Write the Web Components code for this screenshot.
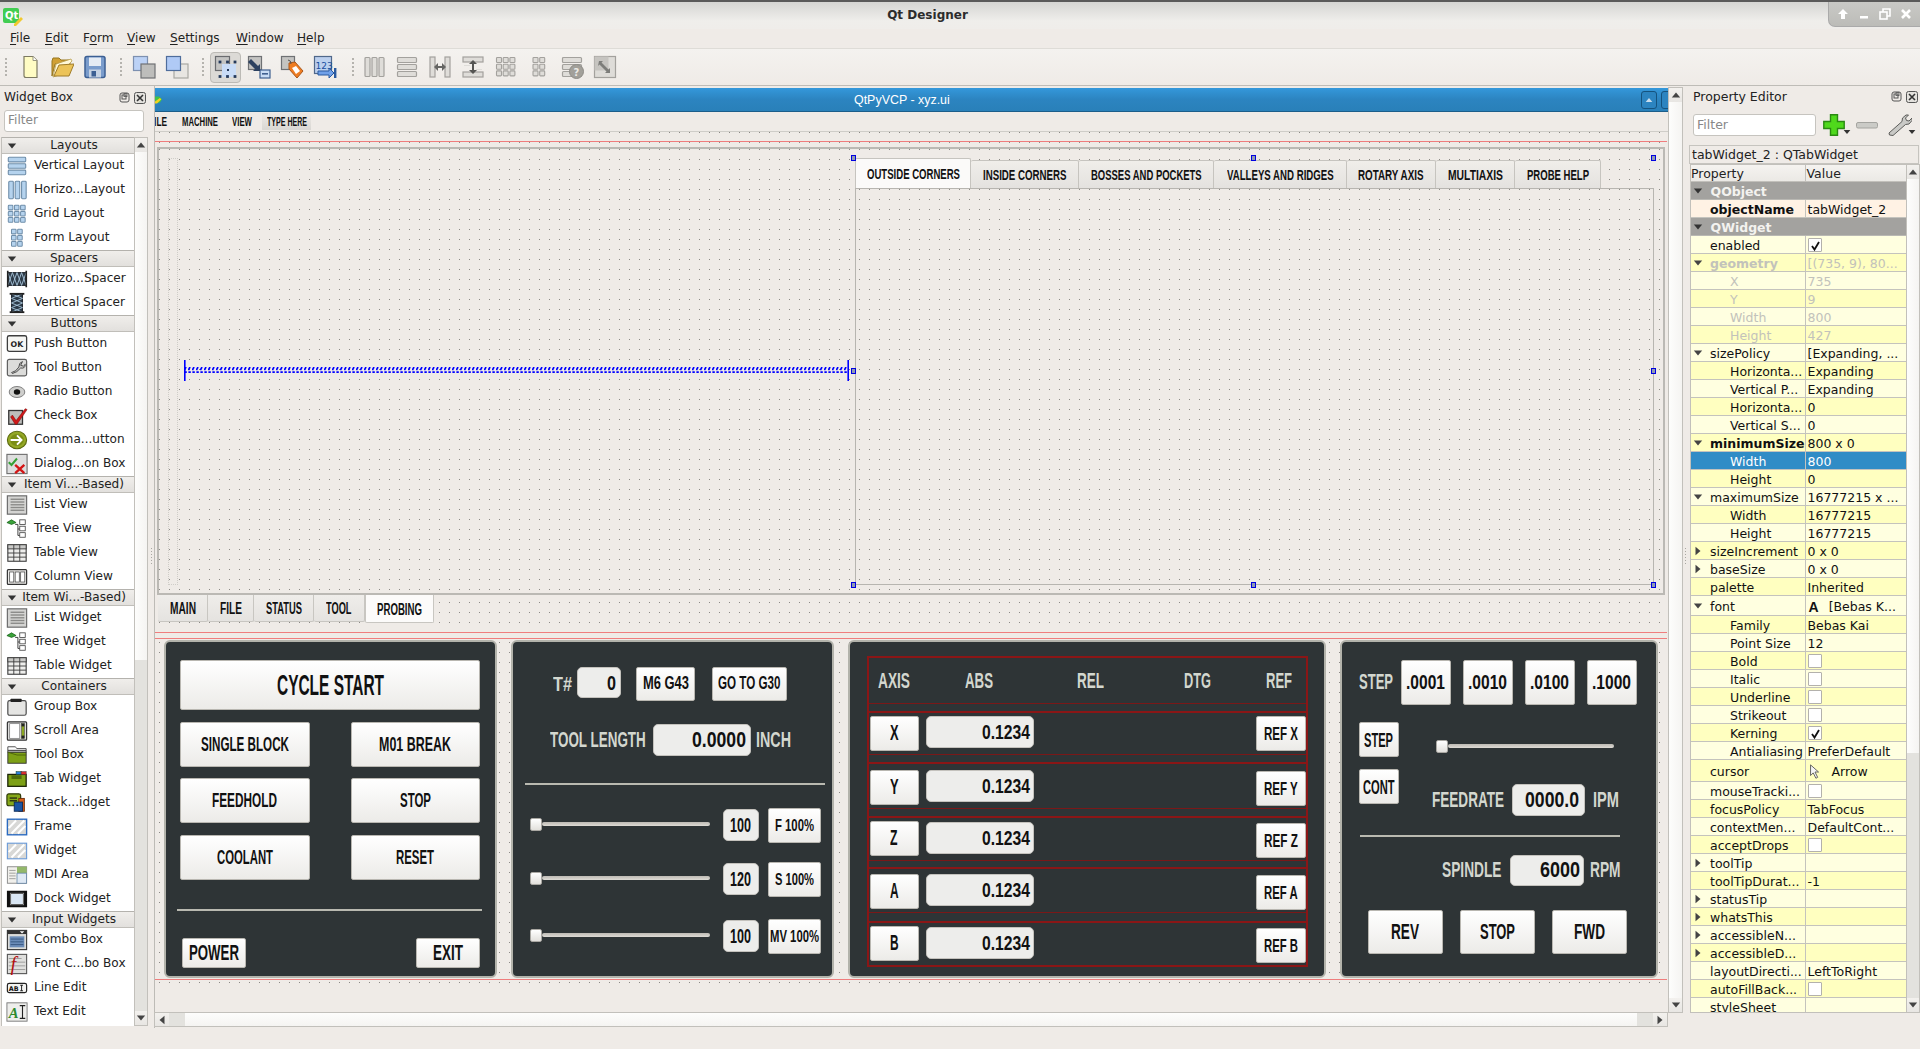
<!DOCTYPE html>
<html lang="en"><head><meta charset="utf-8"><title>Qt Designer</title>
<style>html,body{margin:0;padding:0;height:100%;background:#efebe7;overflow:hidden}</style></head>
<body><qd-app></qd-app>
<script>
const UI='"DejaVu Sans",sans-serif';
const ctx=document.createElement('canvas').getContext('2d');
const S=(inner,w=24,h=w,vb='0 0 24 24')=>`<svg xmlns="http://www.w3.org/2000/svg" viewBox="${vb}" width="${w}" height="${h}" style="display:block;flex:none">${inner}</svg>`;
const r=(x,y,w,h,f,s='none',sw=1,rx=0)=>`<rect x="${x}" y="${y}" width="${w}" height="${h}" fill="${f}" stroke="${s}" stroke-width="${sw}" rx="${rx}"/>`;
const p=(d,f='none',s='none',sw=1)=>`<path d="${d}" fill="${f}" stroke="${s}" stroke-width="${sw}"/>`;
const T=(x,y,t,sz,f,w=700,fam='DejaVu Sans',extra='')=>`<text x="${x}" y="${y}" font-size="${sz}" fill="${f}" font-weight="${w}" font-family="${fam}" ${extra}>${t}</text>`;
const hbars=(f,s)=>[3,10,17].map(x=>r(x,2.5,5,19,f,s,1.2,1)).join('');
const vbars=(f,s)=>[2.5,9.5,16.5].map(y=>r(2.5,y,19,5,f,s,1.2,1)).join('');
const grid=(f,s)=>{let o='';for(let i=0;i<3;i++)for(let j=0;j<3;j++)o+=r(2.5+i*6.7,2.5+j*6.7,5,5,f,s,1.1,.8);return o};
const form=(f,s)=>{let o='';for(let i=0;i<2;i++)for(let j=0;j<3;j++)o+=r(6+i*6.7,2.5+j*6.7,5,5,f,s,1.1,.8);return o};
const GF='#dfddd9',GS='#a3a19d',BF='#b5d3ee',BS='#6f8eaa';
const boxg=r(1.5,1.5,13,13,'#c4c4c2','#6f7174',1.2);
const IC={
 nw:p('M6 1.5h9l4 4v17H8q-2 0-2-2z','#fffcc4','#7d7a62',1.2)+p('M15 1.5v4h4','#fff','#9a9780',1),
 open:p('M2 6l1-3h6l2 2h8l1 3v1H5L2 21z','#d0a035','#97761f',1)+p('M6 9l15-5 1 2-13 14-6 2z','#fff8d8','#b59a4a',.8)+p('M4 21l5-11 15-1-5 12z','#ecc358','#a07c28',1),
 save:r(2,1.5,20,21,'#7a9ccc','#3c5f93',1.5,2)+r(6,2.5,12,8.5,'#e6ecf4')+r(6,14.5,12,8,'#c5d2e3')+r(8.5,16,4.5,5.5,'#3c5f93'),
 front:r(1.5,1.5,14,14,'#bcd2f6','#7d90b0',1.2)+r(9,9,14,14,'#bdbdbb','#6f7174',1.2),
 back:r(9,9,14,14,'#e8e6e2','#a8a8a3',1.2)+r(1.5,1.5,14,14,'#b0caf6','#4f6d9c',1.2),
 edit:r(1.5,1.5,14,14,'#c4c4c2','#6a6c6f',1.2)+r(8,9,14,13,'#c9dcf7')+[[6,7],[21,7],[6,21.5],[21,21.5],[13.5,21.5],[13.5,7]].map(a=>r(a[0]-1.4,a[1]-1.4,2.8,2.8,'#253a5c')).join('')+r(13,14,2,2,'#253a5c'),
 signal:boxg+r(13,15,10,8,'#c8dcf4','#3f5f8f',1.2)+r(15,18,6,1.6,'#3f5f8f')+p('M4 4l7 7 2-2v7H6l2-2-7-7z','#2c4160'),
 buddy:boxg+p('M9 8l6-1 8 9-6 7-8-9z','#ef7d22','#a9561a',1)+p('M12 13l4-2 4 5-4 3z','#fff')+p('M8 5q3 0 3 4','none','#555',1),
 tabo:r(1.5,1.5,17,17,'#bcd0ee','#50688a',1.2)+T(2.5,14,'123',9,'#1a4fa0',400,'DejaVu Sans')+p('M5 16h11v-3l5 5-5 5v-3H5z','#6fa0e8','#2a5aa0',1)+r(21,13,2.4,10,'#2a5aa0'),
 ghbar:hbars(GF,GS),gvbar:vbars(GF,GS),
 gspl:r(2,2,5,20,GF,GS,1.2)+r(17,2,5,20,GF,GS,1.2)+p('M6 12l4-4v3h4V8l4 4-4 4v-3h-4v3z','#656563'),
 gspv:r(2,2,20,5,GF,GS,1.2)+r(2,17,20,5,GF,GS,1.2)+p('M12 5l4 4h-3v6h3l-4 4-4-4h3V9H8z','#555553')+r(3,10,6,1,GF)+r(15,14,6,1,GF),
 ggrid:grid(GF,GS),gform:form(GF,GS),
 gformq:vbars(GF,GS)+`<circle cx="16.5" cy="16.5" r="7" fill="#a2a09a" stroke="#8d8b86"/>`+T(13.5,20.5,'?',10,'#ebe9e5',700),
 gadj:r(1.5,1.5,21,21,'#dedcd8','#a3a19d',1.2)+r(1.5,1.5,14,14,'#c6c4c0')+p('M6 6l4 0-1.5 1.5 7 7L17 13v5h-5l1.5-1.5-7-7L5 11z','#7d7d7a'),
 vbox:vbars(BF,BS),hbox:hbars(BF,BS),gridb:grid(BF,BS),formb:form(BF,BS),
 hsp:r(2,5,20,14,'#2c3a48','#1a1f26',1)+p('M2 5l5 14 5-14 5 14 5-14M2 19l5-14 5 14 5-14 5 14','none','#a6c3d8',1)+r(1,3,1.8,18,'#222')+r(21.2,3,1.8,18,'#222'),
 vsp:r(6,2,12,20,'#2c3a48','#1a1f26',1)+p('M6 2l12 5-12 5 12 5-12 5M18 2L6 7l12 5-12 5 12 5','none','#a6c3d8',1)+r(4,1,16,2,'#222')+r(4,21,16,2,'#222'),
 push:r(1.5,3,21,17,'#f6f6f3','#3e3e3e',1.4,2)+T(5,15.5,'OK',8.5,'#222'),
 tool:r(1.5,2.5,21,18,'#dcdcda','#5e5e5e',1.3,2)+p('M6 17q5-1 8-6l1-4 3-2-2 4 3 1 2-2q0 5-5 4-4 5-9 6z','#c9c9c7','#444',1),
 radio:`<ellipse cx="12" cy="12" rx="8.5" ry="6" fill="#cfcfcd" stroke="#777"/><ellipse cx="12" cy="12" rx="3.5" ry="3" fill="#111"/>`,
 chk:r(3,6,15,15,'#bdbdbb','#333',1.4)+p('M7 11l4 6L21 4l2 1-11 16h-2l-5-8z','#d01818','#7a0f0f',.6),
 cmd:`<ellipse cx="12" cy="12" rx="10.5" ry="9.5" fill="#94a825" stroke="#5c6a10" stroke-width="1.2"/><ellipse cx="12" cy="12" rx="7.5" ry="6.5" fill="#7a8d14"/>`+p('M5 12h12M12 7l5 5-5 5','none','#fff',2),
 dlg:r(1,1.5,22,21,'#dedede','#6d6d6d',1.2)+p('M3 10l3 3 6-7','none','#35a035',2.2)+p('M10 13l10 9M20 13l-10 9','none','#d41515',2.6),
 list:r(1.5,2,21,20,'#d4d4d2','#6c6c6c',1.3)+[5,8,11,14,17].map(y=>r(5,y,15,1.5,'#8a8a88')).join(''),
 tree:p('M1 5l5-3 5 3-5 2z','#39a339','#155c15',.8)+p('M10 7h3v12h3M13 12h3','none','#333',1)+r(15,9,6,5,'#fff','#444',.9)+r(15,16,6,5,'#fff','#444',.9)+r(15,2,6,5,'#fff','#444',.9),
 table:r(2,3,20,18,'#eeeeec','#3d3d3d',1.2)+r(2,3,20,4.5,'#c9c9c7','#3d3d3d',1)+p('M2 12h20M2 16.5h20M8.5 3v18M15 3v18','none','#3d3d3d',1),
 col:r(1.5,4,21,16,'#ecebe8','#333',1.3,1)+r(4,6.5,4.5,11,'#fff','#444',.8)+r(10,6.5,4.5,11,'#fff','#444',.8)+r(16,6.5,4.5,11,'#fff','#444',.8),
 grp:r(2,5,20,16,'#e5e5e3','#4a4a4a',1.3,2)+r(5,3,12,3.5,'#222',"none",1,.5),
 scr:r(1.5,2,21,20,'#dcdcda','#333',1.3,1)+r(4,4,11,16,'#fff','#777',.8)+r(17,4,3,16,'#8aa520','#444',.6)+r(17,4,3,3,'#222')+r(17,17,3,3,'#222'),
 tbx:p('M2 3h8l2 2h10v2H2z','#fff','#333',.9)+p('M2 7h20v2H2z','#e5e5e3','#333',.9)+r(2,9,20,12,'#7da016','#333',1)+p('M2 9l10 3h10','none','#4c6408',1),
 tabw:r(2,7,20,13,'#7da016','#1c2408',1.4)+r(6,8,11,4,'#4f6b0b')+r(11,4,5.5,3.2,'#2d7fd8','#143',.6)+r(16.5,4,5.5,3.2,'#d82d2d','#433',.6),
 stk:r(1,2,15,13,'#86a818','#2c3808',1.3,2)+r(14,7,6,14,'#d85f1a','#6a2d0a',1)+r(9,11,9,10,'#1b55a3','#0c2b5a',1)+r(4,6,8,1.2,'#111')+r(4,9,8,1.2,'#111'),
 frm:r(1.5,3.5,21,17,'#d8d8d6','#2a6ac0',1.5)+p('M3 13l8-8M6 19L20 5M13 19l8-8','none','#fff',2.2),
 wdg:r(1.5,3.5,21,17,'#d8d8d6','#6a9ad8',1.2)+p('M3 13l8-8M6 19L20 5M13 19l8-8','none','#fff',2.2),
 mdi:r(1.5,3,21,18,'#f1f0ec','#888',1)+r(12,3,10.5,7,'#93b86a')+r(12,10,10.5,11,'#dfe9f4','#5b7fa3',.8)+p('M3.5 7h7M3.5 10h7M3.5 13h7M3.5 16h7','none','#9a9a98',1),
 dock:r(1,3,22,18,'#111')+r(5,6,14,12,'#d9e6f4','#fff',1.3)+p('M5 6h14v12H5z','none','#222',.8),
 combo:r(1.5,1.5,21,21,'#dbdbd9','#333',1.2)+r(1.5,1.5,21,4,'#333')+p('M15 2.5h5l-2.500 2.500z','#fff')+r(4,8,16,12,'#6b8cb8')+p('M5 11h14M5 14h14M5 17h14','none','#37567f',1),
 fontc:r(1.5,1.5,21,21,'#dfdfdd','#555',1.2)+p('M3 6h14M3 10h18M3 14h18M3 18h18','none','#999',1)+T(5,20,'f',22,'#b51010',400,'Liberation Serif','font-style="italic"'),
 line:r(1.5,7,21,10,'#f3f3f1','#222',1.3,2)+T(3,15,'AB',7,'#111')+p('M17 9v6M15.500 9h3M15.500 15h3','none','#111',1),
 text:r(1,2,22,20,'#eeeeec','#777',1)+T(3,19,'A',16,'#2e8b2e',700,'Liberation Serif','font-style="italic"')+p('M15 5h6M15 19h6M18 5v14','none','#222',1.2),
};
const tri=(dir,c='#4a4a4a',sz=9)=>{const pts={d:'1,3 11,3 6,9',u:'1,9 11,9 6,3',l:'9,1 9,11 3,6',r:'3,1 3,11 9,6'}[dir];return `<svg viewBox="0 0 12 12" width="${sz}" height="${sz}" style="display:block;flex:none"><polygon points="${pts}" fill="${c}"/></svg>`};
const dockBtns=`<span style="display:flex;gap:4px;margin-left:auto">${S(r(1,1,9,9,'none','#555',1,2)+r(3,3,4,4,'none','#555',1)+r(5,1.6,3,3,'none','#555',.8),11,11,'0 0 11 11')}${S(r(.5,.5,11,11,'#e3e1dd','#555',1,2)+p('M3 3l6 6M9 3l-6 6','none','#333',1.6),12,12,'0 0 12 12')}</span>`;

function el(name,tpl,onconnect){customElements.define(name,class extends HTMLElement{
  constructor(){super();this.attachShadow({mode:'open'})}
  connectedCallback(){if(this._d)return;this._d=1;this.shadowRoot.innerHTML=typeof tpl==='function'?tpl(this):tpl;onconnect&&onconnect(this)}
})}

/* condensed display text, standing in for the Bebas Kai font of the form */
customElements.define('bk-t',class extends HTMLElement{
  constructor(){super();this.attachShadow({mode:'open'}).innerHTML=`<style>:host{display:block;flex:none;white-space:nowrap;font-family:"Liberation Sans",sans-serif;font-weight:700;text-align:left}span{display:inline-block;transform-origin:0 50%}</style><span><slot></slot></span>`}
  connectedCallback(){const w=+this.getAttribute('w'),s=+this.getAttribute('s'),wt=this.getAttribute('wt')||700;
    ctx.font=`${wt} ${s}px "Liberation Sans"`;const n=ctx.measureText(this.textContent).width;
    this.style.cssText+=`;width:${w}px;height:${s}px;line-height:${s}px;font-size:${s}px;font-weight:${wt}`;
    this.shadowRoot.querySelector('span').style.transform=`scaleX(${w/n})`}
});
const t=(w,s,x,st='')=>`<bk-t w="${w}" s="${s}" style="${st}">${x}</bk-t>`;
const lab=(w,s,x,st='')=>t(w,s,x,'color:#d3d7cf;'+st);

customElements.define('vcp-btn',class extends HTMLElement{
  constructor(){super();this.attachShadow({mode:'open'}).innerHTML=`<style>:host{display:flex;flex:none;box-sizing:border-box;align-items:center;justify-content:center;background:linear-gradient(#ffffff,#ecebe8);border:1px solid #b9b7b1;border-radius:2px;color:#111}</style><slot></slot>`}
  connectedCallback(){this.style.width=this.getAttribute('w')+'px';this.style.height=this.getAttribute('h')+'px'}
});
customElements.define('vcp-box',class extends HTMLElement{
  constructor(){super();this.attachShadow({mode:'open'}).innerHTML=`<style>:host{display:flex;flex:none;box-sizing:border-box;align-items:center;justify-content:flex-end;background:#ededeb;border:1px solid #c4c2bd;border-radius:5px;color:#111}</style><slot></slot>`}
  connectedCallback(){this.style.width=this.getAttribute('w')+'px';this.style.height=this.getAttribute('h')+'px';this.style.paddingRight=(this.getAttribute('pr')||4)+'px'}
});
const B=(w,h,tw,fs,x,st='')=>`<vcp-btn w="${w}" h="${h}" style="${st}">${t(tw,fs,x)}</vcp-btn>`;
const X=(w,h,tw,fs,x,st='',pr=4)=>`<vcp-box w="${w}" h="${h}" pr="${pr}" style="${st}">${t(tw,fs,x)}</vcp-box>`;

el('vcp-slider',`<style>:host{display:flex;flex:none;align-items:center;position:relative;height:13px}
 .h{width:12px;height:13px;box-sizing:border-box;flex:none;background:linear-gradient(#fff,#e2e0dc);border:1px solid #aaa8a3;border-radius:2px}
 .g{flex:1;height:4px;background:linear-gradient(#bdbab4,#dedbd5);border-radius:2px}</style><div class="h"></div><div class="g"></div>`,e=>{e.style.width=e.getAttribute('w')+'px'});

el('vcp-panel',`<style>:host{display:flex;flex-direction:column;flex:none;box-sizing:border-box;height:338px;background:#2e3436;border:2px solid #b3b3ab;border-radius:6px}</style><slot></slot>`,e=>{e.style.width=e.getAttribute('w')+'px'});

el('vcp-hr',`<style>:host{display:block;height:2px;background:#b9b9b0;flex:none}</style>`,e=>{e.style.width=e.getAttribute('w')+'px'});

el('vcp-panel-cycle',`<style>:host{display:block}
 .c{display:flex;flex-direction:column;padding:18px 0 0 14px}
 .r{display:flex;justify-content:space-between;width:300px}</style>
 <vcp-panel w="333"><div class="c">
 ${B(300,50,107,29,'CYCLE START')}
 <div class="r" style="margin-top:12px">${B(129.5,45,88,20.5,'SINGLE BLOCK')}${B(129.5,45,72,20.5,'M01 BREAK')}</div>
 <div class="r" style="margin-top:11px">${B(129.5,45,65,20.5,'FEEDHOLD')}${B(129.5,45,31,20.5,'STOP')}</div>
 <div class="r" style="margin-top:12px">${B(129.5,45,56,20.5,'COOLANT')}${B(129.5,45,38,20.5,'RESET')}</div>
 <vcp-hr w="305" style="margin:29px 0 0 -3px"></vcp-hr>
 <div class="r" style="margin-top:27px;padding-left:2px;width:298px">${B(64,30,50,22,'POWER')}${B(64,30,30,22,'EXIT')}</div>
 </div></vcp-panel>`);

const ovr=(top,sc,boxT,bt,tw,st)=>`<div class="o" style="margin-top:${top}px">${`<vcp-slider w="180"></vcp-slider>`}${X(36,32,21,19.5,sc,'margin-left:13px',7)}${B(53.5,34.6,tw,17,bt,'margin-left:8.500px')}</div>`;
el('vcp-panel-tool',`<style>:host{display:block}
 .c{display:flex;flex-direction:column;padding:24.500px 0 0 0}
 .f{display:flex;align-items:center}
 .o{display:flex;align-items:center;margin-left:17px}
 .o vcp-slider{margin-bottom:2px}</style>
 <vcp-panel w="323"><div class="c">
 <div class="f" style="margin-left:40px;height:34px;align-items:flex-start">${lab(19,21,'T#','margin:6px 0 0 0')}${X(44,31.5,9,21,'0','margin-left:4.500px',4)}${B(59,34,46,18.5,'M6 G43','margin-left:15.500px')}${B(75,34,62.500,18.5,'GO TO G30','margin-left:17px')}</div>
 <div class="f" style="margin:23.500px 0 0 37px">${lab(96,22,'TOOL LENGTH')}${X(98,32,54,22,'0.0000','margin-left:7px',4)}${lab(35,22,'INCH','margin-left:5px')}</div>
 <vcp-hr w="300" style="margin:27px 0 0 12px"></vcp-hr>
 ${ovr(23,'100',0,'F 100%',39)}${ovr(19.400,'120',0,'S 100%',39)}${ovr(22.400,'100',0,'MV 100%',49)}
 </div></vcp-panel>`);

const axRow=(ax,tx,top,h,bt,dt,rt)=>`<div class="ar" style="margin-top:${top}px;height:${h}px">
 <vcp-btn w="49" h="35" style="margin:${bt}px 0 0 .5px">${t(tx,22,ax)}</vcp-btn>
 ${X(108,32,48,20,'0.1234',`margin:${dt}px 0 0 7.500px`,3)}
 <vcp-btn w="50" h="35" style="margin:${rt}px 0 0 auto">${t(34,19,'REF '+ax)}</vcp-btn></div>`;
el('vcp-panel-axes',`<style>:host{display:block}
 .c{padding:14px 0 0 17px}
 .fr{box-sizing:border-box;width:441px;height:311px;border:2px solid #8a1616;display:flex;flex-direction:column;padding:0}
 .h{display:flex;align-items:center;height:46px;padding-left:9px;border-bottom:1px solid #7a1818;box-sizing:border-box;flex:none}
 .ar{display:flex;align-items:flex-start;box-sizing:border-box;border-top:2px solid #8a1616;border-bottom:1px solid #7a1818;flex:none}
 .ar:last-child{border-bottom:none}</style>
 <vcp-panel w="478"><div class="c"><div class="fr">
 <div class="h">${lab(32,22,'AXIS')}${lab(28,22,'ABS','margin-left:55px')}${lab(27,22,'REL','margin-left:84px')}${lab(27,22,'DTG','margin-left:80px')}${lab(26,22,'REF','margin-left:55px')}</div>
 ${axRow('X',8.6,6.7,44.6,3.3,3.3,3.3)}${axRow('Y',8.6,7.2,46.2,5.2,5.2,6.2)}${axRow('Z',7.5,7,45,3.3,4,5.6)}${axRow('A',8.6,6.6,46,4.7,4.7,5.7)}${axRow('B',8.6,7.4,44.3,3.3,4,5.3)}
 </div></div></vcp-panel>`);

el('vcp-panel-jog',`<style>:host{display:block}
 .c{position:relative;display:flex;flex-direction:column;padding:18px 0 0 17px}
 .f{display:flex;align-items:center}</style>
 <vcp-panel w="318"><div class="c">
 <div class="f" style="height:44.500px">${lab(34,22,'STEP')}
  ${B(49.5,44.5,39,19.5,'.0001','margin-left:8px')}${B(49.5,44.5,39,19.5,'.0010','margin-left:12.500px')}${B(49.5,44.5,39,19.5,'.0100','margin-left:12.500px')}${B(49.5,44.5,39,19.5,'.1000','margin-left:12.500px')}</div>
 <div class="f" style="align-items:flex-start;margin-top:17.500px">
  <div style="display:flex;flex-direction:column;flex:none">${B(39.5,35,29,20,'STEP')}${B(39.5,35,31.6,20,'CONT','margin-top:12px')}</div>
  <div style="display:flex;flex-direction:column;flex:none;margin-left:33.500px">
   <vcp-slider w="178" style="margin:17.500px 0 0 3.500px"></vcp-slider>
   <div class="f" style="margin-top:31px">${lab(72,22,'FEEDRATE')}${X(73.5,32,54,22,'0000.0','margin-left:7.500px',5)}${lab(26,22,'IPM','margin-left:8px')}</div>
  </div>
 </div>
 <vcp-hr w="260" style="margin:19px 0 0 1px"></vcp-hr>
 <div class="f" style="margin:18px 0 0 83px">${lab(59.5,22,'SPINDLE')}${X(73.5,31.5,40,22,'6000','margin-left:8.500px',3)}${lab(30.5,22,'RPM','margin-left:6.500px')}</div>
 <div class="f" style="margin:23.500px 0 0 9px">${B(74.5,44,28,22,'REV')}${B(74.5,44,35,22,'STOP','margin-left:17.500px')}${B(74.5,44,31,22,'FWD','margin-left:17.500px')}</div>
 </div></vcp-panel>`);

const hnd=(l,tp)=>`<i class="hd" style="left:${l}px;top:${tp}px"></i>`;
el('vcp-tabs-top',`<style>:host{display:block;position:relative;width:799px;height:427px;flex:none}
 .bar{display:flex;align-items:flex-end;height:30px}
 .tb{box-sizing:border-box;height:28px;display:flex;align-items:center;justify-content:center;background:linear-gradient(#f0eeea,#e4e2df);border:1px solid #c6c4bf;border-bottom:none;border-left:none;border-radius:2px 2px 0 0;color:#111}
 .tb.a{height:30px;background:#fbfaf9;border-left:1px solid #c6c4bf}
 .pane{box-sizing:border-box;height:397px;border:1px solid #b7b5b0;border-top-color:#b7b5b0;width:799px}
 .hd{position:absolute;width:5px;height:6px;box-sizing:border-box;background:#8f9bb0;border:1px solid #0000e0;margin:-3px 0 0 -3px}</style>
 <div class="bar">
 <div class="tb a" style="width:116px">${t(93,15,'OUTSIDE CORNERS')}</div>
 <div class="tb" style="width:108px">${t(83.5,15,'INSIDE CORNERS')}</div>
 <div class="tb" style="width:135px">${t(111,15,'BOSSES AND POCKETS')}</div>
 <div class="tb" style="width:133px">${t(107,15,'VALLEYS AND RIDGES')}</div>
 <div class="tb" style="width:89px">${t(66,15,'ROTARY AXIS')}</div>
 <div class="tb" style="width:79px">${t(55,15,'MULTIAXIS')}</div>
 <div class="tb" style="width:86px">${t(62,15,'PROBE HELP')}</div></div>
 <div class="pane"></div>
 ${hnd(-1,0)}${hnd(399,0)}${hnd(799,0)}${hnd(-1,213)}${hnd(799,213)}${hnd(-1,427)}${hnd(399,427)}${hnd(799,427)}`);

el('vcp-spacer',`<style>:host{display:block;flex:none;width:665px;height:21px;position:relative}</style>
 <svg viewBox="0 0 665 21" width="665" height="21" style="display:block"><defs><pattern id="z" width="4" height="6" patternUnits="userSpaceOnUse" x="0" y="7"><path d="M.4 3.200L2 0M.4 5.200h2.400" fill="none" stroke="#0000ff" stroke-width="1.700"/></pattern></defs><rect x="1" y="7" width="664" height="6" fill="url(#z)"/><rect y="0" width="1.600" height="21" x="0" fill="#0000ff"/><rect y="0" width="1.600" height="21" x="663.400" fill="#0000ff"/></svg>`);

const btab=(w,tw,x,a)=>`<div class="t${a?' a':''}" style="width:${w}px">${t(tw,16,x)}</div>`;
el('vcp-form',`<style>:host{display:flex;flex-direction:column;flex:none;width:1513px}
 .tl{height:24px;flex:none;background:linear-gradient(#3498db,#2c84c0 50%,#2980b9);border-bottom:1px solid #1c5e8a;box-sizing:border-box;display:flex;align-items:center;position:relative;color:#fff;overflow:hidden}
 .tl bk-t{position:absolute;left:699px;top:5px}
 .wb{position:absolute;top:3px;box-sizing:border-box;height:18px;border:1px solid #15537e;border-radius:3px;background:#2c84c0;display:flex;align-items:center;justify-content:center}
 .mb{height:20px;flex:none;box-sizing:border-box;border-bottom:1px solid #cfcdc8;display:flex;align-items:flex-start;overflow:hidden;color:#111;padding-top:3px}
 .mb .hv{display:flex;align-items:center;justify-content:center;width:49px;height:18px;margin:-3px 0 0 10px;background:linear-gradient(#efebe7,#d9d7d3)}
 .bd{flex:1;display:flex;flex-direction:column;background-image:radial-gradient(circle at .5px .5px,#8c8a86 .7px,transparent .8px);background-size:10px 10px;background-position:4px 0}
 .red{height:1px;background:#ef7d7d;flex:none;width:1512px}
 .fr{margin:5px 0 0 2px;box-sizing:border-box;width:1508px;height:448px;flex:none;border:2px solid #bbb9b4;display:flex;background-color:#efebe7;background-image:radial-gradient(circle at .5px .5px,#8c8a86 .7px,transparent .8px);background-size:10px 10px;background-position:0 0}
 .dot{box-sizing:border-box;width:10px;height:427px;margin:9px 0 0 9px;border:1px dotted #cfcdc8;flex:none}
 .tb2{display:flex;height:28px;flex:none;margin-left:3px;align-items:flex-start}
 .t{box-sizing:border-box;height:27px;padding-top:2px;display:flex;align-items:center;justify-content:center;background:linear-gradient(#efedea,#e5e3e0);border:1px solid #c8c6c1;border-top:none;border-left:none;border-radius:0 0 2px 2px;color:#111}
 .t.a{height:28px;background:#fcfbfa;border-left:1px solid #c8c6c1}
 .ps{display:flex;gap:14px;margin:1px 0 0 9px;flex:none}</style>
 <div class="tl">${S(p('M-4 2h10l4 4-3 5H-4z','#3fc14b')+p('M0 9l7-5 2 2-6 6H0z','#f5d21f'),7,12,'0 0 10 14')}
  <bk-t w="96" s="13" wt="400" style="font-weight:400">QtPyVCP - xyz.ui</bk-t>
  <div class="wb" style="left:1486px;width:16px">${tri('u','#c9dcec',8)}</div><div class="wb" style="left:1506px;width:16px"></div></div>
 <div class="mb"><bk-t w="18" s="13" style="margin-left:-6px">FILE</bk-t><bk-t w="36" s="13" style="margin-left:15px">MACHINE</bk-t><bk-t w="20" s="13" style="margin-left:14px">VIEW</bk-t><div class="hv">${t(40,13,'TYPE HERE')}</div></div>
 <div class="bd">
  <div class="red" style="margin-top:9px"></div>
  <div class="fr"><div class="dot"></div><vcp-spacer style="margin:211px 0 0 6px"></vcp-spacer><vcp-tabs-top style="margin:9px 0 0 6px"></vcp-tabs-top></div>
  <div class="tb2">${btab(50,26,'MAIN')}${btab(46,22,'FILE')}${btab(60,36,'STATUS')}${btab(51,25.5,'TOOL')}${btab(68.5,45,'PROBING',1)}</div>
  <div class="red" style="margin-top:9px"></div>
  <div class="red" style="margin-top:5px"></div>
  <div class="ps"><vcp-panel-cycle></vcp-panel-cycle><vcp-panel-tool></vcp-panel-tool><vcp-panel-axes></vcp-panel-axes><vcp-panel-jog></vcp-panel-jog></div>
  <div class="red" style="margin-top:1px"></div>
  <div style="height:5px"></div>
 </div>`);

/* generic scrollbar */
el('qd-scroll',e=>{const v=e.getAttribute('o')==='v',b=+e.getAttribute('b')||0,a=+e.getAttribute('a')||0;
 return `<style>:host{display:flex;flex:none;box-sizing:border-box;flex-direction:${v?'column':'row'};background:#fbfaf9;border:1px solid #c2c0bb}
 .b{flex:none;${v?'height:14px':'width:14px'};display:flex;align-items:center;justify-content:center;background:linear-gradient(#f3f1ee,#e8e6e3)}
 .tr{flex:none;background:#e3e2de}.th{flex:1;background:linear-gradient(${v?'90deg,':''}#fdfdfc,#f5f4f2)}</style>
 <div class="b">${tri(v?'u':'l','#444',10)}</div><div class="tr" style="${v?'height':'width'}:${b}px"></div><div class="th"></div><div class="tr" style="${v?'height':'width'}:${a}px"></div><div class="b">${tri(v?'d':'r','#444',10)}</div>`});

/* MDI */
el('qd-mdi',`<style>:host{display:flex;flex:none;width:1529px;height:942px;box-sizing:border-box;position:relative}
 .l{display:flex;flex-direction:column;flex:none;width:1514px;border-left:1px solid #bdbbb6;box-sizing:border-box;padding-top:2px}
 qd-scroll[o=h]{width:1514px;height:15px;margin:27px 0 0 -1px}</style>
 <div class="l"><vcp-form></vcp-form><qd-scroll o="h" b="16" a="16"></qd-scroll></div>
 <qd-scroll o="v" a="0" style="width:15px;height:926px;margin-top:1px"></qd-scroll>`);

/* Widget box */
const CATS=[["Layouts",[["vbox","Vertical Layout"],["hbox","Horizo...Layout"],["gridb","Grid Layout"],["formb","Form Layout"]]],
["Spacers",[["hsp","Horizo...Spacer"],["vsp","Vertical Spacer"]]],
["Buttons",[["push","Push Button"],["tool","Tool Button"],["radio","Radio Button"],["chk","Check Box"],["cmd","Comma...utton"],["dlg","Dialog...on Box"]]],
["Item Vi...-Based)",[["list","List View"],["tree","Tree View"],["table","Table View"],["col","Column View"]]],
["Item Wi...-Based)",[["list","List Widget"],["tree","Tree Widget"],["table","Table Widget"]]],
["Containers",[["grp","Group Box"],["scr","Scroll Area"],["tbx","Tool Box"],["tabw","Tab Widget"],["stk","Stack...idget"],["frm","Frame"],["wdg","Widget"],["mdi","MDI Area"],["dock","Dock Widget"]]],
["Input Widgets",[["combo","Combo Box"],["fontc","Font C...bo Box"],["line","Line Edit"],["text","Text Edit"]]]];
el('qd-cat',e=>`<style>:host{display:block}
 .h{box-sizing:content-box;height:15px;padding-left:12px;background:linear-gradient(#f0eeeb,#e2e0dd);border-top:1px solid #b4b2ad;border-bottom:1px solid #c0beb9;display:flex;align-items:center;position:relative;justify-content:center}
 .h svg{position:absolute;left:5px;top:3px}
 .h span{padding-bottom:2px}</style>
 <div class="h">${tri('d','#333',10)}<span>${e.getAttribute('n')}</span></div><slot></slot>`);
el('qd-item',e=>`<style>:host{display:flex;height:24px;align-items:center;padding-left:4px;background:#fff;white-space:nowrap}span{margin-left:6px;padding-bottom:3px}</style>${S(IC[e.getAttribute('i')],22,22)}<span><slot></slot></span>`);
el('qd-widgetbox',`<style>:host{display:flex;flex-direction:column;flex:none;width:149px;height:942px;font:12.1px ${UI};color:#222}
 .t{height:24px;display:flex;align-items:center;padding:0 3px 0 4px;box-sizing:border-box;flex:none}
 .t>span:first-child{padding-bottom:3px}
 input{box-sizing:border-box;display:block;width:140px;height:22px;margin:0 0 0 4px;border:1px solid #c6c4bf;border-radius:3px;background:#fff;font:12.1px ${UI};padding:0 3px 2px;outline:none}
 input::placeholder{color:#888}
 .w{display:flex;margin-top:5px;flex:none;height:889px}
 .lst{width:133px;margin-left:1px;overflow:hidden;background:#fff;box-sizing:border-box;border-left:1px solid #c2c0bb;flex:none}
 qd-scroll{width:14px;height:889px}</style>
 <div class="t"><span>Widget Box</span>${dockBtns}</div>
 <input placeholder="Filter" value="">
 <div class="w"><div class="lst">${CATS.map(c=>`<qd-cat n="${c[0]}">${c[1].map(i=>`<qd-item i="${i[0]}">${i[1]}</qd-item>`).join('')}</qd-cat>`).join('')}</div>
 <qd-scroll o="v" a="351"></qd-scroll></div>`);

/* Property editor */
const ROWS=[
['g','QObject'],['p','objectName','tabWidget_2','b',0,'peach'],['g','QWidget'],
['p','enabled','#c'],['p','geometry','[(735, 9), 80...','bd',1],
['p','X','735','d',0,0,1],['p','Y','9','d',0,0,1],['p','Width','800','d',0,0,1],['p','Height','427','d',0,0,1],
['p','sizePolicy','[Expanding, ...','',1],
['p','Horizonta...','Expanding','',0,0,1],['p','Vertical P...','Expanding','',0,0,1],['p','Horizonta...','0','',0,0,1],['p','Vertical S...','0','',0,0,1],
['p','minimumSize','800 x 0','b',1],['p','Width','800','s',0,0,1],['p','Height','0','',0,0,1],
['p','maximumSize','16777215 x ...','',1],['p','Width','16777215','',0,0,1],['p','Height','16777215','',0,0,1],
['p','sizeIncrement','0 x 0','',2],['p','baseSize','0 x 0','',2],['p','palette','Inherited'],
['p','font','#f','',1],['p','Family','Bebas Kai','',0,0,1],['p','Point Size','12','',0,0,1],
['p','Bold','#u','',0,0,1],['p','Italic','#u','',0,0,1],['p','Underline','#u','',0,0,1],['p','Strikeout','#u','',0,0,1],['p','Kerning','#c','',0,0,1],['p','Antialiasing','PreferDefault','',0,0,1],
['p','cursor','#a'],['p','mouseTracki...','#u'],['p','focusPolicy','TabFocus'],['p','contextMen...','DefaultCont...'],['p','acceptDrops','#u'],
['p','toolTip','','',2],['p','toolTipDurat...','-1'],['p','statusTip','','',2],['p','whatsThis','','',2],['p','accessibleN...','','',2],['p','accessibleD...','','',2],
['p','layoutDirecti...','LeftToRight'],['p','autoFillBack...','#u'],['p','styleSheet','']];
const cb=c=>`<span class="cb">${c?S(p('M3 7l2.500 3.500L10 3','none','#111',1.8),13,13,'0 0 13 13'):''}</span>`;
el('qd-row',e=>{const d=JSON.parse(e.getAttribute('d')),alt=e.hasAttribute('alt');
 const h=d[2]==='#f'?20:d[2]==='#a'?22:18;
 const base=`<style>:host{display:flex;height:${h}px;box-sizing:border-box;flex:none;white-space:nowrap}
 .k,.v{box-sizing:border-box;display:flex;align-items:center;border-bottom:1px solid #c4c3bd;overflow:hidden;padding-top:2px}
 .k{width:114.500px;border-right:1px solid #c4c3bd;flex:none;position:relative}.v{flex:1;padding-left:2px}
 .k svg{position:absolute;left:1.500px;top:calc(50% - 5px)}
 .cb{display:block;box-sizing:border-box;width:14px;height:14px;margin-top:-2px;background:#fff;border:1px solid #b3b1ac;border-radius:1px}
 .gr{width:100%;height:${h}px;box-sizing:border-box;background:#a3a29f;color:#f3f2ef;font-weight:700;display:flex;align-items:center;padding:2px 0 0 19.500px;border-bottom:1px solid #b9b8b3;position:relative}
 .gr svg{position:absolute;left:1.500px;top:4px}</style>`;
 if(d[0]==='g')return base+`<div class="gr">${tri('d','#333',10)}${d[1]}</div>`;
 const[,n,val,fl,ar,pe,lv]=d;
 let bg=alt?'#ffffc0':'#ffffe0',col='#111',kw=400,vc='#111';
 if(pe)bg='#fff2e4';
 if(fl==='d'||fl==='bd'){col='#c2c2bb';vc='#c2c2bb'}
 if(fl==='b'||fl==='bd')kw=700;
 if(fl==='s'){bg='#308cc6';col='#fff';vc='#fff'}
 let v=val;
 if(val==='#c')v=cb(1);if(val==='#u')v=cb(0);
 if(val==='#f')v=`<b style="font:700 14px 'Liberation Sans';margin:0 10px 0 1px">A</b>[Bebas K...`;
 if(val==='#a')v=S(p('M2 1v12l3-3 3 6 2-1-3-6h4z','#f5f5f5','#555',1),14,16,'0 0 14 18')+`<span style="margin-left:10px">Arrow</span>`;
 return base+`<div class="k" style="background:${bg};color:${col};font-weight:${kw};padding-left:${lv?39:19}px">${ar?tri(ar===1?'d':'r','#444',10):''}${n}</div><div class="v" style="background:${bg};color:${vc}">${v}</div>`});
el('qd-prop',`<style>:host{display:flex;flex-direction:column;flex:none;width:232px;height:942px;font:12.5px ${UI};color:#222}
 .t{height:22px;display:flex;align-items:center;padding:0 2px 0 5px;flex:none;box-sizing:border-box}
 .t>span:first-child{padding-bottom:2px}
 .b{display:flex;align-items:center;height:22px;margin-top:6px;padding-left:5px;flex:none}
 input{box-sizing:border-box;width:123px;height:22px;border:1px solid #c6c4bf;border-radius:3px;font:12.5px ${UI};padding:0 3px 2px;outline:none;background:#fff}
 input::placeholder{color:#888}
 .o{box-sizing:border-box;margin:9px 0 0 1px;width:230px;height:19px;border:1px solid #c6c4bf;padding-left:2px;line-height:17px;flex:none}
 .w{display:flex;margin:0 0 0 2px;flex:none;height:849px}
 .tbl{width:216px;flex:none;display:flex;flex-direction:column;box-sizing:border-box;border:1px solid #c2c0bb;border-right:none;overflow:hidden}
 .hd{display:flex;height:17px;box-sizing:border-box;flex:none;background:linear-gradient(#f5f3f0,#ebe9e5);border-bottom:1px solid #c2c0bb;line-height:17px}
 .hd span{display:block;box-sizing:border-box}.hd .a{width:114.500px;border-right:1px solid #c2c0bb}.hd .c{padding-left:1px}
 .rows{height:830.500px;overflow:hidden;flex:none;background:#ffffe0}
 qd-scroll{flex:none}</style>
 <div class="t"><span>Property Editor</span>${dockBtns}</div>
 <div class="b"><input placeholder="Filter">
 <span style="margin-left:7px;display:flex">${S(p('M7.500 .8h7v6.700h6.700v7h-6.700v6.700h-7v-6.700H.8v-7h6.700z','#4fd91c','#2a8a12',1.4),22,22,'0 0 22 22')}</span>
 <span style="margin:14px 0 0 -2px">${tri('d','#333',8)}</span>
 <span style="margin-left:5px">${S(r(.5,8.5,21,5.5,'#cbcbc7','#a4a4a0',1,1.5),22,22,'0 0 22 22')}</span>
 <span style="margin-left:10px">${S(p('M1.500 21l-.5-2L14 7.500l.5-3.500L18 1l2.500 0-3 3 1 2.500 2.500.5 3-3 0 2.500-3 3.500-3.500.5L5 21.500z','#c9c9c6','#5c5c5a',1),24,22,'0 0 24 22')}</span>
 <span style="margin:14px 0 0 -4px">${tri('d','#333',8)}</span>
 </div>
 <div class="o">tabWidget_2 : QTabWidget</div>
 <div class="w"><div class="tbl"><div class="hd"><span class="a">Property</span><span class="c">Value</span></div>
 <div class="rows">${(()=>{let o='',alt=false;ROWS.forEach(d=>{if(d[0]==='g'){alt=false;}o+=`<qd-row ${alt?'alt':''} d='${JSON.stringify(d)}'></qd-row>`;if(d[0]!=='g')alt=!alt});return o})()}</div>
 <qd-scroll o="h" style="height:14px;width:216px;flex:none;border-right:none"></qd-scroll></div>
 <qd-scroll o="v" a="245" style="width:14px;height:849px"></qd-scroll></div>`);

/* window chrome */
el('qd-titlebar',`<style>:host{display:flex;position:relative;align-items:center;height:29px;flex:none;background:linear-gradient(#d5d5d3,#efeeeb 70%,#efedea);border-top:2px solid #5a5a5a;box-sizing:border-box;font:700 12px ${UI};color:#2c2c2c}
 .q{margin:3px 0 0 3px}.m{flex:1;text-align:center;margin:0 0 1px 4px}
 .wc{height:25px;width:92px;box-sizing:border-box;display:flex;gap:0;align-items:center;justify-content:space-around;padding:0 4px;background:linear-gradient(#c9c9c6,#bcbcb8);border-radius:0 0 0 7px;align-self:flex-start;border-left:1px solid #aaa;border-bottom:1px solid #aaa}</style>
 <span class="q">${S(r(0,0,16,15,'#41cd52','none',1,2)+T(2,11,'Qt',10,'#fff',700)+p('M11 16l7-7 2 2-7 7h-2z','#f1c930'),20,18,'0 0 20 18')}</span><span class="m">Qt Designer</span>
 <div class="wc">${S(p('M6 1l5 5H8v5H4V6H1z','#fff'),12,12,'0 0 12 12')}${S(r(2,8,8,2.5,'#fff'),12,12,'0 0 12 12')}${S(r(1,4,7,7,'none','#fff',1.600)+p('M4 4V1h7v7H8','none','#fff',1.600),12,12,'0 0 12 12')}${S(p('M2 2l8 8M10 2l-8 8','none','#fff',2.600),12,12,'0 0 12 12')}</div>`);
el('qd-menubar',`<style>:host{display:flex;align-items:center;height:19px;box-sizing:border-box;padding:0 0 2px 10px;flex:none;font:12.1px ${UI};color:#222}
 span{display:block;flex:none}u{text-underline-offset:2px}</style>
 <span style="width:35px"><u>F</u>ile</span><span style="width:38px"><u>E</u>dit</span><span style="width:44px">F<u>o</u>rm</span><span style="width:43px"><u>V</u>iew</span><span style="width:66px"><u>S</u>ettings</span><span style="width:61px"><u>W</u>indow</span><span><u>H</u>elp</span>`);
const ti=(k,ml,sel,w=24)=>sel?`<span class="sel" style="margin-left:${ml}px">${S(IC[k],w,w)}</span>`:`<span style="margin-left:${ml}px">${S(IC[k],w,w)}</span>`;
el('qd-toolbar',`<style>:host{display:flex;align-items:center;height:38px;flex:none;box-sizing:border-box;background:linear-gradient(#f4f2ef,#efebe7);border-top:1px solid #dedcd7;border-bottom:1px solid #bebcb7}
 span{display:block;flex:none}.h{width:4px;height:18px;background-image:radial-gradient(circle at 1px 1px,#b5b3ae 1px,transparent 1.100px);background-size:4px 4px}
 .sel{display:flex;align-items:center;justify-content:center;width:31px;height:31px;background:#dcdad6;border:1px solid #bcbab5;border-radius:4px;box-sizing:border-box}</style>
 <span class="h" style="margin-left:5px"></span>${ti('nw',9)}${ti('open',8)}${ti('save',9)}
 <span class="h" style="margin-left:13px"></span>${ti('front',8)}${ti('back',9)}
 <span class="h" style="margin-left:13px"></span>${ti('edit',4,1)}${ti('signal',6)}${ti('buddy',9)}${ti('tabo',9)}
 <span class="h" style="margin-left:15px"></span>${ti('ghbar',6)}${ti('gvbar',9)}${ti('gspl',9)}${ti('gspv',9)}${ti('ggrid',9)}${ti('gform',9)}${ti('gformq',9)}${ti('gadj',9)}`);
el('qd-hndl',`<style>:host{display:block;flex:none;width:5px;height:100%;position:relative}i{position:absolute;left:2px;top:462px;width:1px;height:18px;background-image:radial-gradient(circle at .5px .5px,#a9a7a2 .6px,transparent .7px);background-size:1px 3px}</style><i></i>`);
el('qd-app',`<style>:host{display:flex;flex-direction:column;width:1920px;height:1049px;background:#efebe7;overflow:hidden}
 .m{display:flex;flex:none;height:942px}.st{flex:1}</style>
 <qd-titlebar></qd-titlebar><qd-menubar></qd-menubar><qd-toolbar></qd-toolbar>
 <div class="m"><qd-widgetbox></qd-widgetbox><qd-hndl></qd-hndl><qd-mdi></qd-mdi><qd-hndl></qd-hndl><qd-prop></qd-prop></div><div class="st"></div>`);
</script></body></html>
